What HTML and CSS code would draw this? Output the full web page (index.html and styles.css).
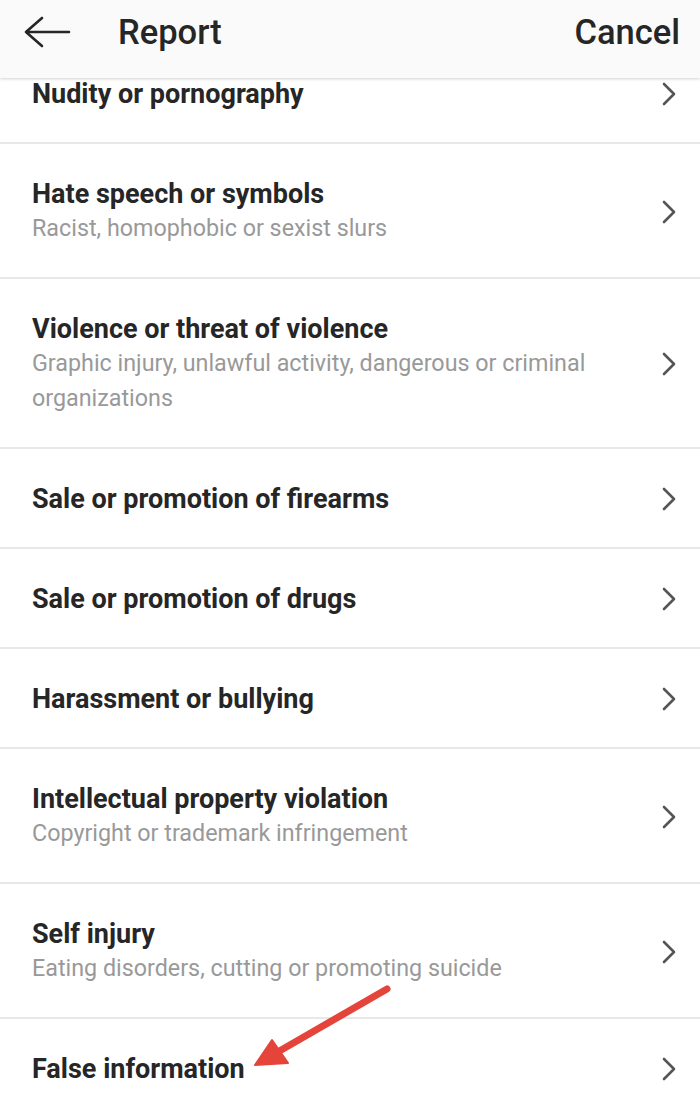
FILE: index.html
```html
<!DOCTYPE html>
<html lang="en">

<head>
    <meta charset="UTF-8">
    <meta name="viewport" content="width=device-width, initial-scale=1.0">
    <title>Report</title>
    <link rel="stylesheet" href="styles.css">
</head>

<body>

    <header class="topbar">
        <div class="topbar-left">
            <svg class="back" width="48" height="32" viewBox="0 0 48 32">
                <path d="M46 16H3M19 2L3 16L19 30" fill="none" stroke="#262626" stroke-width="2.6" stroke-linecap="round" stroke-linejoin="round"/>
            </svg>
            <span class="title">Report</span>
        </div>
        <span class="cancel">Cancel</span>
    </header>

    <ul class="options">
        <li class="option">
            <div class="text">
                <div class="label">Nudity or pornography</div>
            </div>
            <svg class="chev" width="14" height="24" viewBox="0 0 14 24"><path d="M2 2L12 12L2 22" /></svg>
        </li>
        <li class="option">
            <div class="text">
                <div class="label">Hate speech or symbols</div>
                <div class="desc">Racist, homophobic or sexist slurs</div>
            </div>
            <svg class="chev" width="14" height="24" viewBox="0 0 14 24"><path d="M2 2L12 12L2 22" /></svg>
        </li>
        <li class="option">
            <div class="text">
                <div class="label">Violence or threat of violence</div>
                <div class="desc">Graphic injury, unlawful activity, dangerous or criminal organizations</div>
            </div>
            <svg class="chev" width="14" height="24" viewBox="0 0 14 24"><path d="M2 2L12 12L2 22" /></svg>
        </li>
        <li class="option">
            <div class="text">
                <div class="label">Sale or promotion of firearms</div>
            </div>
            <svg class="chev" width="14" height="24" viewBox="0 0 14 24"><path d="M2 2L12 12L2 22" /></svg>
        </li>
        <li class="option">
            <div class="text">
                <div class="label">Sale or promotion of drugs</div>
            </div>
            <svg class="chev" width="14" height="24" viewBox="0 0 14 24"><path d="M2 2L12 12L2 22" /></svg>
        </li>
        <li class="option">
            <div class="text">
                <div class="label">Harassment or bullying</div>
            </div>
            <svg class="chev" width="14" height="24" viewBox="0 0 14 24"><path d="M2 2L12 12L2 22" /></svg>
        </li>
        <li class="option">
            <div class="text">
                <div class="label">Intellectual property violation</div>
                <div class="desc">Copyright or trademark infringement</div>
            </div>
            <svg class="chev" width="14" height="24" viewBox="0 0 14 24"><path d="M2 2L12 12L2 22" /></svg>
        </li>
        <li class="option">
            <div class="text">
                <div class="label">Self injury</div>
                <div class="desc">Eating disorders, cutting or promoting suicide</div>
            </div>
            <svg class="chev" width="14" height="24" viewBox="0 0 14 24"><path d="M2 2L12 12L2 22" /></svg>
        </li>
        <li class="option">
            <div class="text">
                <div class="label">False information</div>
            </div>
            <svg class="chev" width="14" height="24" viewBox="0 0 14 24"><path d="M2 2L12 12L2 22" /></svg>
        </li>
    </ul>

    <!-- annotation arrow -->
    <svg class="pointer" width="700" height="1106" viewBox="0 0 700 1106">
        <line x1="387" y1="989" x2="276" y2="1053" stroke="#e5443b" stroke-width="7" stroke-linecap="round" />
        <polygon points="255,1065 272,1040 288,1063" fill="#e5443b" stroke="#e5443b" stroke-width="2" stroke-linejoin="round" />
    </svg>

</body>

</html>
```

FILE: styles.css
```css
html,
body {
    margin: 0;
    padding: 0;
    background: #fff;
    font-family: Roboto, 'Noto Sans', sans-serif;
    color: #262626;
    overflow: hidden;
}

/* Header */

.topbar {
    position: absolute;
    top: 0;
    left: 0;
    right: 0;
    height: 78px;
    box-sizing: border-box;
    padding: 0 20px 0 23px;
    display: flex;
    align-items: center;
    justify-content: space-between;
    background: #fafafa;
    box-shadow: 0 1px 3px rgba(0, 0, 0, 0.18);
    z-index: 2;
}

.topbar-left {
    display: flex;
    align-items: center;
    gap: 47px;
}

.back {
    display: block;
    margin-top: -14px;
}

.title,
.cancel {
    font-size: 34.5px;
    font-weight: 500;
    color: #262626;
    margin-top: -15px;
}

/* Options list */

.options {
    list-style: none;
    margin: 44px 0 0;
    padding: 0;
}

.option {
    display: flex;
    align-items: center;
    justify-content: space-between;
    padding: 33px 24px 31px 32px;
    border-bottom: 2px solid #e8e8e8;
}

.text {
    flex: 1;
    padding-right: 30px;
}

.label {
    font-size: 27px;
    font-weight: 700;
    line-height: 34px;
    color: #262626;
}

.desc {
    font-size: 23.3px;
    line-height: 35px;
    color: #999;
}

.chev {
    flex: none;
    display: block;
}

.chev path {
    fill: none;
    stroke: #555;
    stroke-width: 2.6;
    stroke-linecap: round;
    stroke-linejoin: round;
}

/* Annotation */

.pointer {
    position: absolute;
    top: 0;
    left: 0;
    pointer-events: none;
    z-index: 3;
}
```
